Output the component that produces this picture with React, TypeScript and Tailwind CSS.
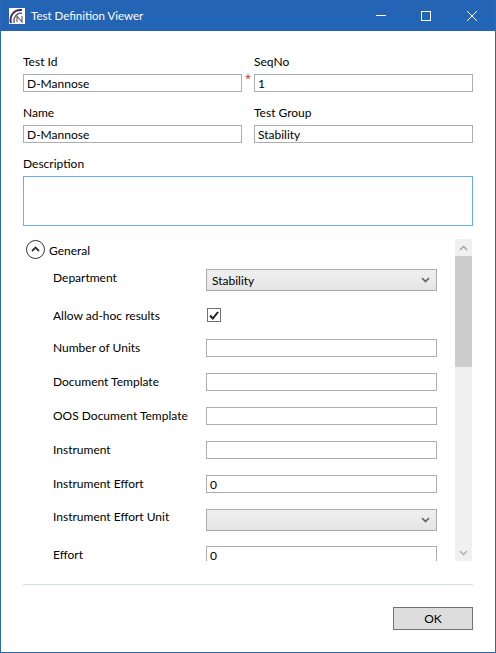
import { ReactNode } from 'react';

const font = { fontFamily: 'Lato, "Open Sans", "Liberation Sans", sans-serif' };

function Chevron({ className = 'text-[#606060]' }: { className?: string }) {
  return (
    <svg width="9" height="6" viewBox="0 0 9 6" className={className}>
      <path d="M1 1l3.5 3.5L8 1" fill="none" stroke="currentColor" strokeWidth="1.6" />
    </svg>
  );
}

function TextBox({ value = '', className = '' }: { value?: string; className?: string }) {
  return (
    <div className={`h-[18px] border border-[#abadb3] bg-white pl-[3px] text-[12px] leading-[17px] text-[#000000] ${className}`}>
      {value}
    </div>
  );
}

function Combo({ value = '' }: { value?: string }) {
  return (
    <div className="flex h-[22px] items-center justify-between border border-[#acacac] bg-gradient-to-b from-[#f0f0f0] to-[#e5e5e5] pl-[5px] pr-[6px] text-[12px] text-[#000000]">
      <span className="pt-px">{value}</span>
      <Chevron />
    </div>
  );
}

function Field({ label, children }: { label: string; children: ReactNode }) {
  return (
    <div className="flex flex-col">
      <div className="h-[21px] pt-px text-[12px] leading-[16px] text-[#000000]">{label}</div>
      {children}
    </div>
  );
}

function Row({ label, children, className = '', labelClass = '' }: { label: string; children: ReactNode; className?: string; labelClass?: string }) {
  return (
    <div className={`flex items-center ${className}`}>
      <div className={`w-[153px] shrink-0 text-[12px] leading-[16px] text-[#000000] ${labelClass}`}>{label}</div>
      <div className="w-[231px]">{children}</div>
    </div>
  );
}

export default function App() {
  return (
    <div style={font} className="flex h-[653px] w-[496px] flex-col overflow-hidden border-x border-b border-[#2a69b5] bg-white">
      {/* Title bar */}
      <div className="-mx-px flex h-[31px] shrink-0 items-center bg-[#2364b5] text-white">
        <svg width="16" height="16" viewBox="0 0 16 16" className="ml-[9px]">
          <rect width="16" height="16" fill="#ffffff" />
          <path d="M2 15C0 8 5 1 13 2" fill="none" stroke="#3d2a5c" strokeWidth="2" />
          <path d="M5 15C4 10 7 5 13 5" fill="none" stroke="#6d5a88" strokeWidth="1.5" />
          <path d="M8 14V8l5 6V8" fill="none" stroke="#555555" strokeWidth="1.1" />
        </svg>
        <span className="ml-[6px] text-[11.5px]">Test Definition Viewer</span>
        <div className="ml-auto flex items-center">
          <div className="h-px w-[10px] bg-white" />
          <div className="ml-[35px] h-[10px] w-[10px] border border-white" />
          <svg width="10" height="10" viewBox="0 0 10 10" className="ml-[36px] mr-[19px]">
            <path d="M0 0l10 10M10 0L0 10" stroke="#ffffff" strokeWidth="1" />
          </svg>
        </div>
      </div>

      {/* Form */}
      <div className="flex flex-1 flex-col pl-[22px] pr-[22px]">
        <div className="mt-[22px] grid grid-cols-[219px_219px] gap-x-[12px] gap-y-[12px]">
          <Field label="Test Id">
            <div className="relative">
              <TextBox value="D-Mannose" />
              <span className="absolute left-[222px] top-[-3px] font-['Open_Sans'] text-[11px] leading-[14px] text-[#e02020]">*</span>
            </div>
          </Field>
          <Field label="SeqNo">
            <TextBox value="1" />
          </Field>
          <Field label="Name">
            <TextBox value="D-Mannose" />
          </Field>
          <Field label="Test Group">
            <TextBox value="Stability" />
          </Field>
        </div>

        <div className="mt-[12px] w-[450px]">
          <Field label="Description">
            <div className="h-[50px] border border-[#66aef0] bg-white" />
          </Field>
        </div>

        {/* Scrolling section */}
        <div className="mt-[13px] flex h-[322px] w-[449px] overflow-hidden">
          <div className="w-[432px] overflow-hidden">
            <div className="flex items-center pl-[3px] pt-px">
              <div className="flex h-[19px] w-[19px] items-center justify-center rounded-full border border-[#333333]">
                <svg width="9" height="7" viewBox="0 0 9 7">
                  <path d="M1 5l3.5-3.5L8 5" fill="none" stroke="#333333" strokeWidth="1.8" />
                </svg>
              </div>
              <span className="ml-[4px] pt-[2px] text-[12px] leading-[16px] text-[#000000]">General</span>
            </div>
            <div className="pl-[30px]">
              <Row label="Department" className="mt-[10px]" labelClass="mb-[5px]">
                <Combo value="Stability" />
              </Row>
              <Row label="Allow ad-hoc results" className="mt-[17px] h-[14px]" labelClass="pt-px">
                <div className="ml-px flex h-[14px] w-[14px] items-center justify-center border border-[#707070] bg-white">
                  <svg width="10" height="9" viewBox="0 0 10 9">
                    <path d="M1 4.5L3.8 7.5 9 1" fill="none" stroke="#1f1f1f" strokeWidth="2" />
                  </svg>
                </div>
              </Row>
              <Row label="Number of Units" className="mt-[17px]">
                <TextBox />
              </Row>
              <Row label="Document Template" className="mt-[16px]">
                <TextBox />
              </Row>
              <Row label="OOS Document Template" className="mt-[16px]">
                <TextBox />
              </Row>
              <Row label="Instrument" className="mt-[16px]">
                <TextBox />
              </Row>
              <Row label="Instrument Effort" className="mt-[16px]">
                <TextBox value="0" />
              </Row>
              <Row label="Instrument Effort Unit" className="mt-[16px]" labelClass="mb-[6px]">
                <Combo />
              </Row>
              <Row label="Effort" className="mt-[15px]">
                <TextBox value="0" />
              </Row>
            </div>
          </div>
          <div className="ml-auto flex w-[17px] flex-col bg-[#f0f0f0]">
            <div className="flex h-[17px] items-center justify-center">
              <svg width="9" height="6" viewBox="0 0 9 6">
                <path d="M1 5l3.5-3.5L8 5" fill="none" stroke="#a3a3a3" strokeWidth="1.4" />
              </svg>
            </div>
            <div className="h-[111px] bg-[#cdcdcd]" />
            <div className="mt-auto flex h-[17px] items-center justify-center">
              <Chevron className="text-[#b5b5b5]" />
            </div>
          </div>
        </div>

        <div className="mt-[23px] h-px w-[450px] bg-[#d3e0ea]" />

        <div className="mt-[22px] flex w-[450px] justify-end">
          <button className="h-[23px] w-[80px] border border-[#707070] bg-[#dddddd] text-[12px] text-[#000000]">OK</button>
        </div>
      </div>
    </div>
  );
}
